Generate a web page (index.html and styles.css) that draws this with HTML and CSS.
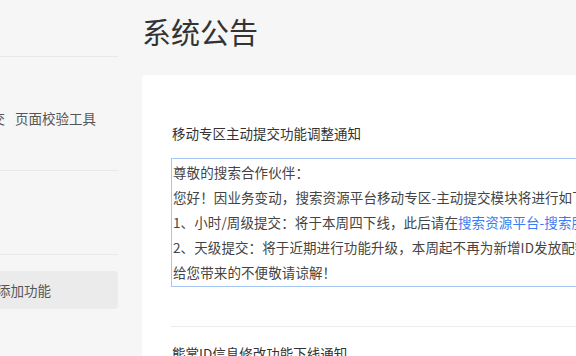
FILE: index.html
```html
<!DOCTYPE html>
<html lang="zh-CN">
<head>
  <meta charset="UTF-8" />
  <meta name="viewport" content="width=device-width, initial-scale=1.0" />
  <title>系统公告</title>
  <link rel="stylesheet" href="styles.css">
</head>
<body>
  <div class="sidebar">
    <div class="side-top"></div>
    <div class="side-group">
      <div class="tool-row">
        <a>主动提交</a>
        <a>页面校验工具</a>
      </div>
    </div>
    <div class="side-group short"></div>
    <div class="side-item active">添加功能</div>
  </div>

  <div class="main">
    <h1 class="page-title">系统公告</h1>
    <div class="card">
      <div class="notice">
        <h3 class="notice-title">移动专区主动提交功能调整通知</h3>
        <div class="notice-body">
          <p>尊敬的搜索合作伙伴：</p>
          <p>您好！因业务变动，搜索资源平台移动专区-主动提交模块将进行如下调整：</p>
          <p>1、小时/周级提交：将于本周四下线，此后请在<a href="#">搜索资源平台-搜索服务-普通收录</a>中提交；</p>
          <p>2、天级提交：将于近期进行功能升级，本周起不再为新增ID发放配额；</p>
          <p>给您带来的不便敬请谅解！</p>
        </div>
      </div>
      <div class="notice">
        <h3 class="notice-title">熊掌ID信息修改功能下线通知</h3>
      </div>
    </div>
  </div>
</body>
</html>
```

FILE: styles.css
```css
body {
  margin: 0;
  font-family: "Noto Sans CJK SC", "Liberation Sans", sans-serif;
  background: #f6f6f6;
  color: #333;
  display: flex;
  height: 100vh;
  overflow: hidden;
}
.sidebar {
  width: 118px;
  flex-shrink: 0;
  overflow: hidden;
  font-size: 13.5px;
  color: #555;
}
.side-top {
  height: 56px;
  border-bottom: 1px solid #e9e9e9;
}
.side-group {
  height: 113px;
  border-bottom: 1px solid #e9e9e9;
}
.side-group.short {
  height: 83px;
}
.tool-row {
  display: flex;
  gap: 10px;
  margin-left: -49px;
  padding-top: 51px;
  line-height: 20px;
  white-space: nowrap;
}
.side-item {
  margin-top: 16px;
  height: 38px;
  line-height: 38px;
  text-indent: -3px;
  white-space: nowrap;
  border-radius: 0 4px 4px 0;
}
.side-item.active {
  background: #ebebeb;
}
.main {
  flex: 1;
  padding-left: 24px;
  overflow: hidden;
}
.page-title {
  margin: 0;
  padding-top: 11px;
  font-size: 29px;
  font-weight: normal;
  line-height: 40px;
  color: #333;
}
.card {
  margin-top: 24px;
  width: 800px;
  height: 400px;
  background: #fff;
  border-radius: 4px;
  padding: 48px 29px 0;
}
.notice-title {
  margin: 0;
  font-size: 13.5px;
  font-weight: normal;
  line-height: 20px;
  padding-left: 1px;
}
.notice-body {
  margin-top: 15px;
  border: 1px solid #a6c6f4;
  padding: 1px 1px;
  font-size: 13.5px;
  line-height: 25px;
  letter-spacing: 0.1px;
  white-space: nowrap;
  color: #444;
}
.notice-body p {
  margin: 0;
}
.notice-body a {
  color: #3b7cf0;
  text-decoration: none;
}
.notice + .notice {
  margin-top: 39px;
  border-top: 1px solid #ececec;
  padding-top: 16px;
}
```
